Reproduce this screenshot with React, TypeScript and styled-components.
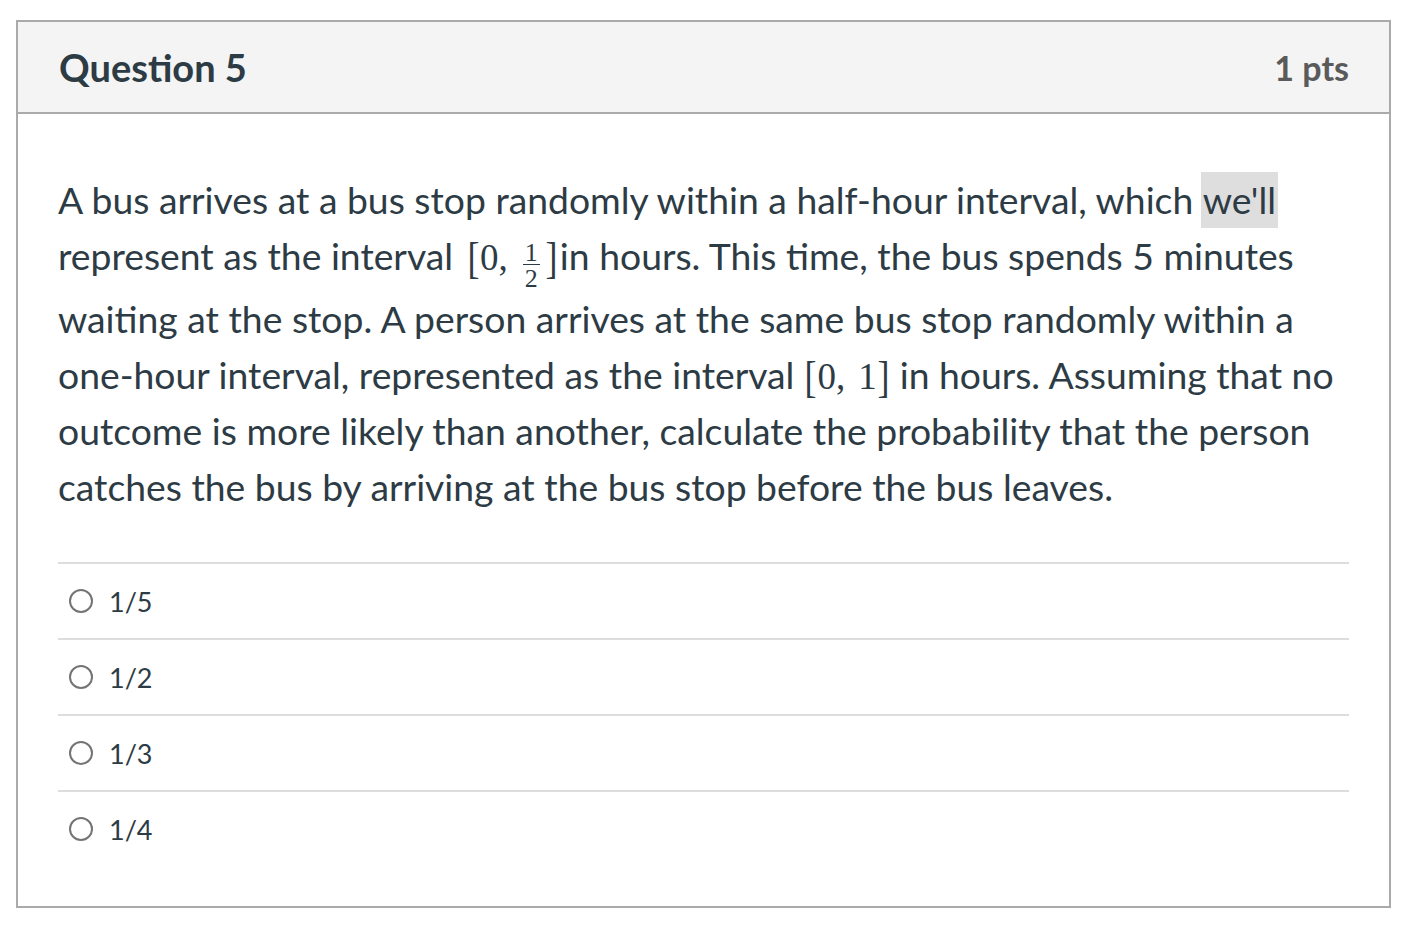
import React from "react";
import styled, { createGlobalStyle } from "styled-components";

const Global = createGlobalStyle`
  html, body { margin: 0; padding: 0; background: #fff; }
  body { font-family: Lato, "Noto Sans", sans-serif; color: #2d3b45; }
`;

const Card = styled.section`
  margin: 20px 0 0 16px;
  width: 1375px;
  box-sizing: border-box;
  border: 2px solid #aaaaaa;
`;

const Header = styled.header`
  height: 92px;
  box-sizing: border-box;
  background: #f4f4f4;
  border-bottom: 2px solid #aaaaaa;
  display: flex;
  align-items: center;
  justify-content: space-between;
  padding: 0 40px 0 41px;
`;

const Title = styled.h2`
  margin: 0;
  font-size: 38px;
  font-weight: 700;
  color: #2d3b45;
`;

const Points = styled.span`
  font-size: 34px;
  font-weight: 700;
  color: #5a5a5a;
`;

const Body = styled.div`
  padding: 58px 40px 40px 40px;
`;

const Para = styled.div`
  margin: 0 0 47px 0;
  font-size: 37.3px;
  line-height: 56px;
  white-space: nowrap;
`;

const Line = styled.span<{ $extra?: number }>`
  display: block;
  height: ${(p) => 56 + (p.$extra ?? 0)}px;
`;

const Highlight = styled.span`
  display: inline-block;
  background: #dedede;
  padding: 0 2px;
  margin-left: -2px;
`;

const MathSpan = styled.span<{ $before: number; $after: number }>`
  font-family: "Liberation Serif", "DejaVu Serif", serif;
  font-size: 37px;
  margin-left: ${(p) => p.$before}px;
  margin-right: ${(p) => p.$after}px;
`;

const Bracket = styled.span`
  font-size: 45px;
  font-weight: 400;
  display: inline-block;
  vertical-align: -3px;
  line-height: 40px;
  transform: scaleX(0.8);
  margin: 0 -1px;
`;

const Comma = styled.span<{ $gap: number }>`
  margin-right: ${(p) => p.$gap}px;
`;

const Frac = styled.span`
  display: inline-flex;
  flex-direction: column;
  align-items: center;
  font-size: 26px;
  line-height: 19px;
  vertical-align: 9px;
  margin: 0 5px 0 2px;
`;

const Num = styled.span`
  padding: 0 2px 2px;
  border-bottom: 1.5px solid #2d3b45;
`;

const Den = styled.span`
  padding-top: 4px;
`;

const List = styled.div`
  display: flex;
  flex-direction: column;
`;

const Row = styled.label`
  height: 76px;
  box-sizing: border-box;
  border-top: 2px solid #dddddd;
  display: flex;
  align-items: center;
  gap: 16px;
  padding-left: 11px;
  font-size: 27px;
  color: #2d3b45;
`;

const Radio = styled.span`
  width: 24px;
  height: 24px;
  box-sizing: border-box;
  border: 2px solid #747474;
  border-radius: 50%;
  flex-shrink: 0;
`;

const answers = ["1/5", "1/2", "1/3", "1/4"];

export default function App() {
  return (
    <>
      <Global />
      <Card>
        <Header>
          <Title>Question 5</Title>
          <Points>1 pts</Points>
        </Header>
        <Body>
          <Para>
            <Line>
              A bus arrives at a bus stop randomly within a half-hour interval, which <Highlight>we'll</Highlight>
            </Line>
            <Line $extra={7}>
              represent as the interval
              <MathSpan $before={14} $after={2}>
                <Bracket>[</Bracket>0<Comma $gap={13}>,</Comma>
                <Frac>
                  <Num>1</Num>
                  <Den>2</Den>
                </Frac>
                <Bracket>]</Bracket>
              </MathSpan>
              in hours. This time, the bus spends 5 minutes
            </Line>
            <Line>waiting at the stop. A person arrives at the same bus stop randomly within a</Line>
            <Line>
              one-hour interval, represented as the interval
              <MathSpan $before={10} $after={10}>
                <Bracket>[</Bracket>0<Comma $gap={13}>,</Comma>1<Bracket>]</Bracket>
              </MathSpan>
              in hours. Assuming that no
            </Line>
            <Line>outcome is more likely than another, calculate the probability that the person</Line>
            <Line>catches the bus by arriving at the bus stop before the bus leaves.</Line>
          </Para>
          <List>
            {answers.map((a) => (
              <Row key={a}>
                <Radio />
                <span>{a}</span>
              </Row>
            ))}
          </List>
        </Body>
      </Card>
    </>
  );
}
